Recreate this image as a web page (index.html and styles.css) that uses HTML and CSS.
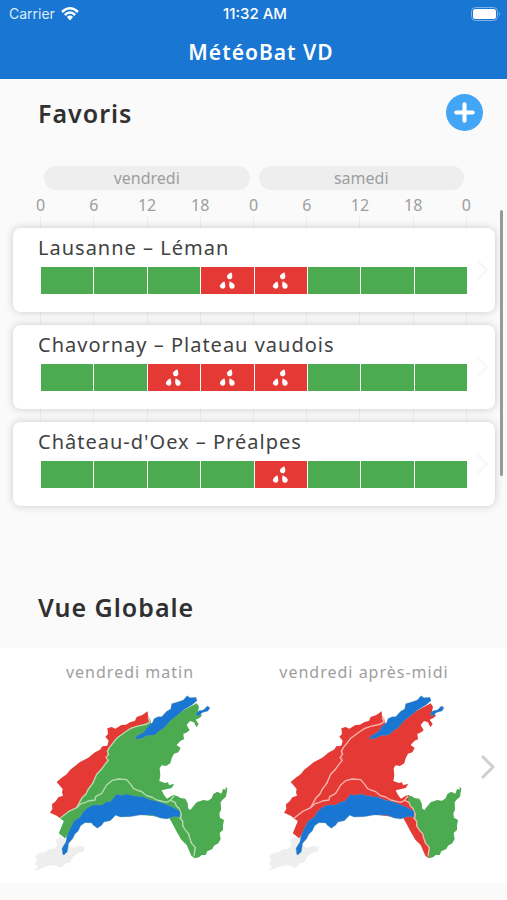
FILE: index.html
```html
<!DOCTYPE html>
<html lang="fr">
<head>
<meta charset="utf-8">
<meta name="viewport" content="width=device-width, initial-scale=1">
<title>MétéoBat VD</title>
<link rel="stylesheet" href="styles.css">
</head>
<body>
<svg class="defs" aria-hidden="true">
  <symbol id="drops" viewBox="0 0 51 54">
    <path d="M37 1C39 6 40 10 40 14A8 8 0 1 1 25 10C28 6 32 3 37 1Z"/>
    <path d="M16 28C18 33 19 38 19 43A8 8 0 1 1 4 38C7 34 11 31 16 28Z"/>
    <path d="M32 28C37 31 42 33 45 37A8 8 0 1 1 31 43C30 38 31 33 32 28Z"/>
  </symbol>
  <symbol id="chevron" viewBox="0 0 16 26">
    <path d="M2 2L13 13L2 24" fill="none" stroke="currentColor" stroke-width="3"/>
  </symbol>
  <symbol id="vaud" viewBox="0 0 660 570">
    <path fill="#eeeeee" d="M40 558L55 545L45 537L50 524L46 512L60 503L75 501L87 493L100 492L112 482L108 466L120 456L137 460L138 478L160 488L176 482L195 486L190 500L176 503L160 515L150 533L138 534L125 548L100 540L75 545L60 553Z"/>
    <path class="plateau" d="M120 400L145 380L170 368L185 340L205 315L230 268L255 238L265 220L262 205L268 190L290 160L320 138L350 124L388 112L390 100L394 118L404 122L530 55L537 65L534 78L546 92L538 99L527 104L536 117L529 127L522 112L510 108L500 120L509 136L498 144L490 146L492 163L482 167L470 180L482 189L475 202L462 206L455 220L451 235L438 243L425 241L419 250L421 270L418 288L435 294L444 292L447 300L463 297L455 309L442 312L425 316L432 330L441 341L455 332L465 330L475 362L482 385L300 380L220 380L160 430L135 459L117 445L132 408Z"/>
    <path class="shore" d="M120 400L145 380L170 368L195 352L225 345L227 335L245 325L260 300L275 287L295 282L320 284L335 302L350 315L365 320L380 332L410 345L440 352L455 347L465 358L475 372L484 390L484 405L496 436L508 450L512 473L525 488L524 520L514 512L500 480L484 464L470 440L458 417L448 400L300 380L220 380L160 430L135 459L117 445L132 408Z"/>
    <path class="alps" d="M463 332L472 333L481 339L496 341L503 355L505 371L511 375L520 364L530 352L550 345L564 347L575 340L580 327L592 320L604 326L609 312L617 314L617 306L622 310L618 335L607 345L602 352L603 375L598 385L600 398L612 405L609 420L609 435L599 444L602 462L595 475L582 482L577 492L562 499L557 510L545 510L537 517L524 520L526 488L512 473L508 450L496 436L484 405L484 390L475 372L462 350Z"/>
    <path class="jura" d="M120 400L110 392L90 383L97 372L96 358L107 349L115 337L129 332L126 322L128 312L110 291L127 277L140 268L150 255L180 231L205 218L225 202L240 194L247 184L262 182L266 167L256 155L264 147L262 130L275 126L286 131L304 120L318 119L330 112L345 107L350 96L367 90L383 79L384 93L388 98L388 112L350 124L320 138L290 160L268 190L262 205L265 220L255 238L230 268L205 315L185 340L170 368L145 380Z"/>
    <g class="borders">
      <path d="M120 400L145 380L170 368L185 340L198 327L205 312L218 296L230 268L242 256L255 238L265 226L258 217L266 208L262 199L268 188L290 160L320 138L332 130L350 124L378 118L390 111L384 97"/>
      <path d="M170 368L183 356L195 353L205 348L225 345L227 335L245 325L260 300L275 287L295 282L320 284L335 302L340 310L350 315L365 320L380 332L395 336L410 345L440 352L450 347L462 333"/>
      <path d="M452 346L465 352L469 363L477 370L484 388L480 400L488 408L488 423L498 438L506 446L508 456L515 475L526 487L522 512"/>
    </g>
    <path class="lake" d="M128 508L126 490L138 470L140 455L150 432L162 408L180 397L190 380L203 368L220 360L245 360L260 350L271 350L290 328L305 331L320 327L340 332L370 336L395 346L410 348L450 363L480 378L480 396L460 395L440 402L420 399L400 391L360 390L330 395L300 396L287 391L271 407L252 411L245 421L232 430L220 421L215 414L195 413L182 422L175 438L165 447L158 461L146 475L142 500L132 510Z"/>
    <path class="lake" d="M346 158L355 150L372 141L384 124L398 112L402 101L414 95L425 95L440 79L452 72L455 56L475 50L490 45L501 32L510 38L528 37L531 47L517 59L490 76L470 92L450 108L432 129L416 139L405 150L380 152L365 160L350 163Z"/>
    <path class="lake" d="M529 85L537 77L550 75L562 63L570 68L564 78L546 83L539 92L531 92Z"/>
  </symbol>
</svg>

<header class="app-header">
  <div class="status">
    <div class="carrier">
      <span>Carrier</span>
      <svg class="wifi" viewBox="0 0 18 14" aria-hidden="true">
        <path d="M1 5Q9 -2.400 17 5M3.800 8Q9 3.200 14.200 8" fill="none" stroke="#fff" stroke-width="2.400"/>
        <path d="M5.900 10Q9 7.200 12.100 10L9 13.400Z" fill="#fff"/>
      </svg>
    </div>
    <time class="clock">11:32 AM</time>
    <svg class="battery" viewBox="0 0 30 14" aria-hidden="true">
      <rect x="0.500" y="0.500" width="26" height="13" rx="4" fill="none" stroke="#7fb2e6"/>
      <rect x="2" y="2" width="23" height="10" rx="2.500" fill="#fff"/>
      <path d="M28 5Q30 7 28 9Z" fill="#7fb2e6"/>
    </svg>
  </div>
  <h1>MétéoBat VD</h1>
</header>

<main>
  <section class="favorites">
    <div class="section-head">
      <h2>Favoris</h2>
      <button class="add" type="button" aria-label="Ajouter un favori">
        <svg viewBox="0 0 36 36" aria-hidden="true"><path d="M18 10V26M10 18H26" stroke="#fff" stroke-width="4" stroke-linecap="round"/></svg>
      </button>
    </div>
    <div class="days"><span>vendredi</span><span>samedi</span></div>
    <div class="timeline">
      <div class="hours">
        <span>0</span><span>6</span><span>12</span><span>18</span><span>0</span><span>6</span><span>12</span><span>18</span><span>0</span>
      </div>
      <div class="cards">
        <article class="card">
          <h3>Lausanne – Léman</h3>
          <div class="track">
            <i></i><i></i><i></i><i class="rain"><svg><use href="#drops"/></svg></i><i class="rain"><svg><use href="#drops"/></svg></i><i></i><i></i><i></i>
          </div>
          <svg class="more" aria-hidden="true"><use href="#chevron"/></svg>
        </article>
        <article class="card">
          <h3>Chavornay – Plateau vaudois</h3>
          <div class="track">
            <i></i><i></i><i class="rain"><svg><use href="#drops"/></svg></i><i class="rain"><svg><use href="#drops"/></svg></i><i class="rain"><svg><use href="#drops"/></svg></i><i></i><i></i><i></i>
          </div>
          <svg class="more" aria-hidden="true"><use href="#chevron"/></svg>
        </article>
        <article class="card">
          <h3>Château-d'Oex – Préalpes</h3>
          <div class="track">
            <i></i><i></i><i></i><i></i><i class="rain"><svg><use href="#drops"/></svg></i><i></i><i></i><i></i>
          </div>
          <svg class="more" aria-hidden="true"><use href="#chevron"/></svg>
        </article>
      </div>
    </div>
    <div class="scrollbar"></div>
  </section>

  <section class="overview">
    <h2>Vue Globale</h2>
    <div class="maps">
      <figure class="morning">
        <figcaption>vendredi matin</figcaption>
        <svg class="map" viewBox="0 0 660 570" role="img" aria-label="Carte du canton, vendredi matin"><use href="#vaud"/></svg>
      </figure>
      <figure class="afternoon">
        <figcaption>vendredi après-midi</figcaption>
        <svg class="map" viewBox="0 0 660 570" role="img" aria-label="Carte du canton, vendredi après-midi"><use href="#vaud"/></svg>
      </figure>
      <button class="next" type="button" aria-label="Suivant"><svg><use href="#chevron"/></svg></button>
    </div>
  </section>
</main>
</body>
</html>
```
FILE: styles.css
```css
:root {
  --blue: #1976d2;
  --green: #4caa50;
  --red: #e53935;
  --muted: #9e9e9e;
}

* { box-sizing: border-box; }

body {
  margin: 0;
  background: #fafafa;
  color: #303030;
  font-family: "Noto Sans", "Open Sans", sans-serif;
}

h1, h2, h3, figure { margin: 0; }

button {
  padding: 0;
  border: 0;
  background: none;
  cursor: pointer;
}

.defs {
  position: absolute;
  width: 0;
  height: 0;
}

.app-header {
  height: 79px;
  background: var(--blue);
  color: #fff;
  text-align: center;
}

.status {
  display: grid;
  grid-template-columns: 1fr auto 1fr;
  align-items: center;
  height: 28px;
  padding: 0 6px 0 9px;
  font: 14px/28px Inter, sans-serif;
}

.carrier {
  display: flex;
  align-items: center;
  gap: 6px;
  color: #dcebfa;
}

.wifi { width: 18px; height: 14px; }

.clock {
  font-size: 15px;
  font-weight: 500;
}

.battery {
  justify-self: end;
  width: 30px;
  height: 14px;
}

h1 {
  padding-left: 15px;
  font-size: 21px;
  font-weight: 600;
  line-height: 48px;
  letter-spacing: 1px;
}

h2 {
  font-size: 25px;
  font-weight: 600;
  line-height: 34px;
  letter-spacing: 1px;
}

.favorites { position: relative; }

.section-head {
  display: flex;
  align-items: center;
  justify-content: space-between;
  padding: 15px 24px 0 38px;
}

.add {
  width: 37px;
  height: 37px;
  border-radius: 50%;
  background: #42a5f5;
}

.add svg {
  display: block;
  width: 100%;
}

.days {
  display: grid;
  grid-template-columns: 1fr 1fr;
  gap: 9px;
  margin: 35px 43px 0 44px;
}

.days span {
  border-radius: 12px;
  background: #eeeeee;
  color: var(--muted);
  font-size: 16px;
  line-height: 24px;
  text-align: center;
}

.timeline { display: grid; }

.hours {
  grid-area: 1 / 1;
  display: grid;
  grid-template-columns: repeat(9, 1fr);
  margin: 4px 14px 20px;
  color: var(--muted);
  font-size: 16px;
  line-height: 22px;
  text-align: center;
}

.hours span {
  display: flex;
  flex-direction: column;
  align-items: center;
}

.hours span::after {
  content: "";
  flex: 1;
  width: 1px;
  background: #efefef;
}

.cards {
  grid-area: 1 / 1;
  display: grid;
  gap: 13px;
  margin: 38px 12px 0 13px;
}

.card {
  position: relative;
  height: 84px;
  padding: 8px 28px 0;
  border-radius: 8px;
  background: #fff;
  box-shadow: 0 0 8px rgba(0, 0, 0, 0.2);
}

h3 {
  margin-left: -3px;
  color: #424242;
  font-size: 20px;
  font-weight: 400;
  line-height: 24px;
  letter-spacing: 1px;
}

.track {
  display: grid;
  grid-template-columns: repeat(8, 1fr);
  gap: 1px;
  height: 27px;
  margin-top: 7px;
}

.track i {
  display: flex;
  align-items: center;
  justify-content: center;
  background: var(--green);
}

.track .rain { background: var(--red); }

.track svg {
  width: 17px;
  height: 18px;
  fill: #fff;
}

.more {
  position: absolute;
  top: 31px;
  right: 5px;
  width: 15px;
  height: 22px;
  color: #f8f8f8;
}

.scrollbar {
  position: absolute;
  top: 131px;
  right: 4px;
  width: 3px;
  height: 266px;
  border-radius: 2px;
  background: #999;
}

.overview { padding-top: 84px; }

.overview h2 { padding-left: 38px; }

.maps {
  display: grid;
  grid-template-columns: 220fr 220fr 19px;
  column-gap: 14px;
  align-items: center;
  margin-top: 24px;
  padding: 11px 0 8px 20px;
  background: #fff;
}

figure { text-align: center; }

figcaption {
  color: var(--muted);
  font-size: 16px;
  line-height: 26px;
  letter-spacing: 1px;
  white-space: nowrap;
}

.map {
  display: block;
  width: 100%;
}

.morning {
  --plateau: var(--green);
  --shore: var(--green);
  --line: #b5dcb0;
}

.afternoon {
  --plateau: var(--red);
  --shore: var(--red);
  --line: #f6b5ad;
}

.jura { fill: var(--red); }
.plateau { fill: var(--plateau); }
.shore { fill: var(--shore); }
.alps { fill: var(--green); }

.lake {
  fill: var(--blue);
  stroke: #7f9fa8;
  stroke-width: 1px;
}

.borders {
  fill: none;
  stroke: var(--line);
  stroke-width: 4px;
  stroke-linejoin: round;
}

.next {
  justify-self: start;
  margin-left: -8px;
  color: #d0d0d0;
}

.next svg {
  display: block;
  width: 16px;
  height: 26px;
}
```
